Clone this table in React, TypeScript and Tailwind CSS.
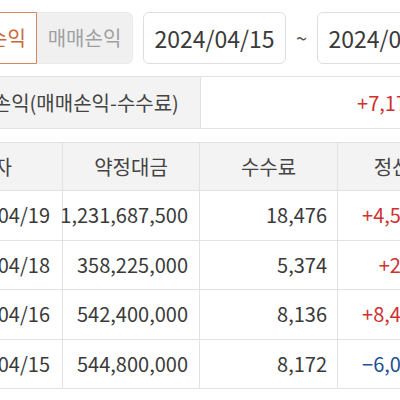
const rows = [
  { date: "2024/04/19", amount: "1,231,687,500", fee: "18,476", net: "+4,531,524" },
  { date: "2024/04/18", amount: "358,225,000", fee: "5,374", net: "+241,626" },
  { date: "2024/04/16", amount: "542,400,000", fee: "8,136", net: "+8,463,864" },
  { date: "2024/04/15", amount: "544,800,000", fee: "8,172", net: "-6,059,828" },
];

export default function App() {
  return (
    <div
      className="w-[400px] h-[400px] overflow-hidden bg-white text-[#3a3a3a]"
      style={{ fontFamily: '"Noto Sans CJK KR", "Noto Sans", sans-serif' }}
    >
      {/* tabs + period */}
      <div className="flex items-center h-[52px] mt-[12px] -ml-[59px] w-[520px]">
        <div className="flex h-full">
          <div className="w-[96px] h-full flex items-center justify-center border border-[#d2875f] rounded-l-md bg-white text-[20px] text-[#c9673a]">
            실현손익
          </div>
          <div className="w-[96px] h-full flex items-center justify-center border border-l-0 border-[#ebebeb] rounded-r-md bg-[#f0f0f0] text-[20px] text-[#a0a0a0]">
            매매손익
          </div>
        </div>
        <div className="ml-[10px] w-[143px] h-full flex items-center justify-center border border-[#dedede] rounded-md text-[23px]">
          2024/04/15
        </div>
        <div className="w-[31px] text-center text-[20px] text-[#555]">~</div>
        <div className="w-[143px] h-full flex items-center justify-center border border-[#dedede] rounded-md text-[23px]">
          2024/04/19
        </div>
      </div>

      {/* summary */}
      <div className="flex h-[53px] mt-[12px] -ml-[44px] w-[527px] border-y border-[#e2e2e2]">
        <div className="w-[244px] bg-[#f3f3f3] flex items-center text-[20px] text-[#444]">
          실현손익(매매손익-수수료)
        </div>
        <div className="flex-1 flex items-center justify-end pr-[26px] border-l border-[#e2e2e2] text-[20px] text-[#cf3131]">
          +7,177,186
        </div>
      </div>

      {/* list */}
      <div className="mt-[13px] -ml-[44px] w-[527px] border-t border-[#e2e2e2]">
        <div className="grid grid-cols-[106px_137px_138px_146px] h-[48px] bg-[#f3f3f3] border-b border-[#e2e2e2] text-[20px] text-[#444]">
          <div className="flex items-center justify-end pr-[50px]">일자</div>
          <div className="flex items-center justify-center border-l border-[#e2e2e2]">약정대금</div>
          <div className="flex items-center justify-center border-l border-[#e2e2e2]">수수료</div>
          <div className="flex items-center justify-center border-l border-[#e2e2e2]">정산금액</div>
        </div>
        {rows.map((r) => (
          <div
            key={r.date}
            className="grid grid-cols-[106px_137px_138px_146px] h-[49.5px] border-b border-[#e2e2e2] text-[20px]"
          >
            <div className="flex items-center justify-end pr-[12px]">{r.date}</div>
            <div className="flex items-center justify-end pr-[11px] border-l border-[#e2e2e2]">{r.amount}</div>
            <div className="flex items-center justify-end pr-[10px] border-l border-[#e2e2e2]">{r.fee}</div>
            <div
              className={
                "flex items-center justify-end pr-[21px] border-l border-[#e2e2e2] " +
                (r.net.startsWith("-") ? "text-[#1d4f91]" : "text-[#cf3131]")
              }
            >
              {r.net.startsWith("-") ? "−" + r.net.slice(1) : r.net}
            </div>
          </div>
        ))}
      </div>
    </div>
  );
}
